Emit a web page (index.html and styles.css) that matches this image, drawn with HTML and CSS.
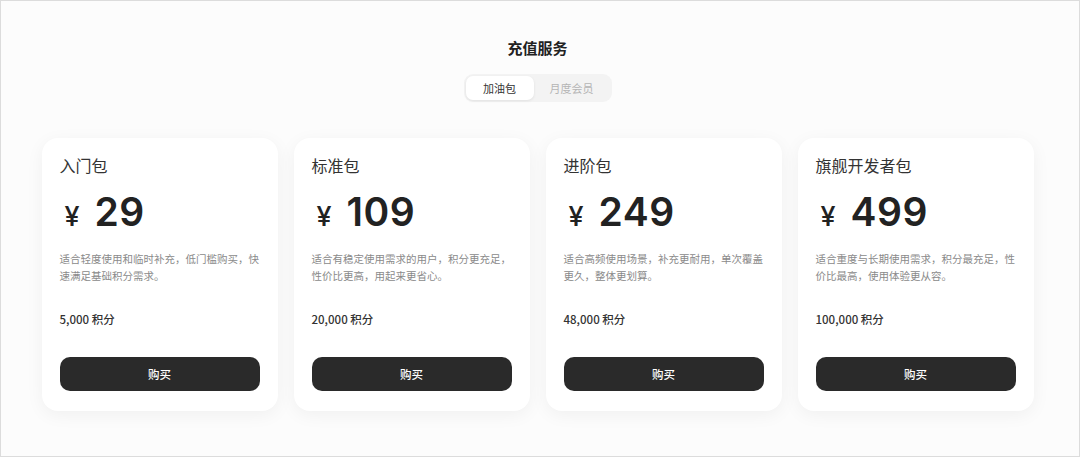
FILE: index.html
```html
<!DOCTYPE html>
<html lang="zh">
<head>
<meta charset="utf-8">
<link rel="stylesheet" href="styles.css">
</head>
<body>
<div class="frame">
  <h1 class="heading">充值服务</h1>
  <div class="tabs">
    <div class="tab active">加油包</div>
    <div class="tab">月度会员</div>
  </div>
  <div class="cards">
    <div class="card">
      <div class="name">入门包</div>
      <div class="price"><span class="yen">¥</span><span class="num">29</span></div>
      <p class="desc">适合轻度使用和临时补充，低门槛购买，快速满足基础积分需求。</p>
      <div class="points">5,000 积分</div>
      <button class="buy">购买</button>
    </div>
    <div class="card">
      <div class="name">标准包</div>
      <div class="price"><span class="yen">¥</span><span class="num">109</span></div>
      <p class="desc">适合有稳定使用需求的用户，积分更充足，性价比更高，用起来更省心。</p>
      <div class="points">20,000 积分</div>
      <button class="buy">购买</button>
    </div>
    <div class="card">
      <div class="name">进阶包</div>
      <div class="price"><span class="yen">¥</span><span class="num">249</span></div>
      <p class="desc">适合高频使用场景，补充更耐用，单次覆盖更久，整体更划算。</p>
      <div class="points">48,000 积分</div>
      <button class="buy">购买</button>
    </div>
    <div class="card">
      <div class="name">旗舰开发者包</div>
      <div class="price"><span class="yen">¥</span><span class="num">499</span></div>
      <p class="desc">适合重度与长期使用需求，积分最充足，性价比最高，使用体验更从容。</p>
      <div class="points">100,000 积分</div>
      <button class="buy">购买</button>
    </div>
  </div>
</div>
</body>
</html>
```
FILE: styles.css
```css
* { box-sizing: border-box; }
html, body { margin: 0; padding: 0; }
body {
  font-family: "Noto Sans CJK SC", "Inter", sans-serif;
  background: #fff;
  color: #222;
}
.frame {
  width: 1080px;
  height: 457px;
  border: 1px solid #dcdcdc;
  background: #fcfcfc;
  display: flex;
  flex-direction: column;
  align-items: center;
  padding-top: 36px;
  padding-right: 5px;
}
.heading {
  margin: 0;
  font-size: 15px;
  font-weight: 600;
  line-height: 22px;
  color: #222;
}
.tabs {
  margin-top: 15px;
  display: flex;
  background: #f3f3f3;
  border-radius: 9px;
  padding: 2px;
}
.tab {
  height: 24px;
  line-height: 24px;
  text-align: center;
  font-size: 11px;
  color: #b5b5b5;
  border-radius: 7px;
}
.tab.active {
  width: 68px;
  background: #fff;
  color: #333;
  box-shadow: 0 1px 3px rgba(0,0,0,0.08);
}
.tab:not(.active) {
  width: 76px;
}
.cards {
  margin-top: 36px;
  display: flex;
  gap: 16px;
}
.card {
  width: 236px;
  height: 273px;
  background: #fff;
  border-radius: 16px;
  box-shadow: 0 4px 18px rgba(0,0,0,0.05);
  padding: 16px 18px 20px;
  display: flex;
  flex-direction: column;
}
.name {
  font-size: 16px;
  line-height: 22px;
  color: #333;
}
.price {
  margin-top: 16px;
  display: flex;
  align-items: baseline;
  height: 40px;
}
.yen {
  font-family: "Inter", sans-serif;
  font-size: 27px;
  font-weight: 500;
  margin-left: 5px;
  margin-right: 15px;
  color: #222;
}
.num {
  font-family: "Inter", sans-serif;
  font-size: 39px;
  font-weight: 600;
  line-height: 40px;
  color: #222;
  letter-spacing: 0.5px;
}
.desc {
  margin: 18px 0 0;
  font-size: 10.5px;
  line-height: 17px;
  color: #8a8a8a;
  height: 34px;
}
.points {
  margin-top: 27px;
  font-size: 11.5px;
  font-weight: 500;
  color: #333;
  line-height: 16px;
}
.buy {
  margin-top: auto;
  height: 34px;
  border: none;
  border-radius: 10px;
  background: #2a2a2a;
  color: #fff;
  font-family: inherit;
  font-size: 11.5px;
  font-weight: 500;
}
```
